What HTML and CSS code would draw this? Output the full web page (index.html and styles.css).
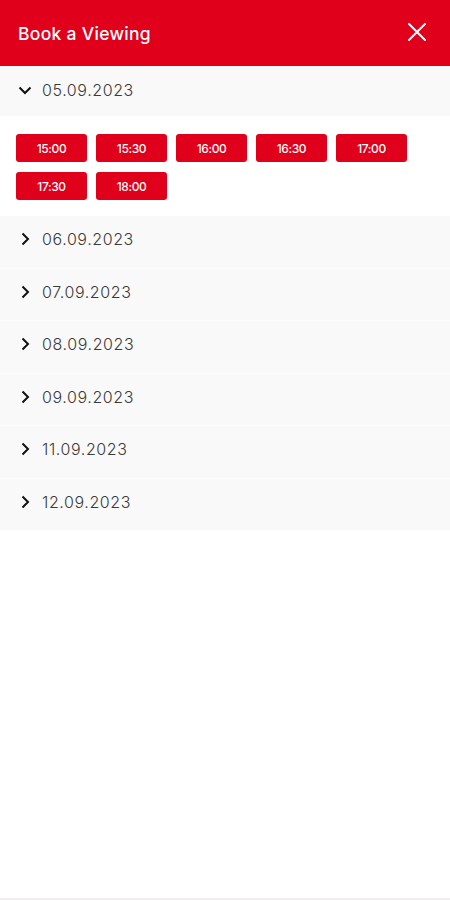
FILE: index.html
```html
<!DOCTYPE html>
<html>
<head>
<meta charset="utf-8">
<link rel="stylesheet" href="styles.css">
</head>
<body>
<div class="page">
  <header class="header">
    <h1 class="title">Book a Viewing</h1>
    <svg class="close" width="20" height="20" viewBox="0 0 20 20"><path d="M2 2 L18 18 M18 2 L2 18" stroke="#fff" stroke-width="2" fill="none" stroke-linecap="round"/></svg>
  </header>
  <div class="day open">
    <svg class="chev" width="14" height="14" viewBox="0 0 14 14"><path d="M1.5 4.5 L7 10 L12.5 4.5" stroke="#111" stroke-width="2" fill="none"/></svg>
    <span class="date">05.09.2023</span>
  </div>
  <div class="slots">
    <button class="slot">15:00</button>
    <button class="slot">15:30</button>
    <button class="slot">16:00</button>
    <button class="slot">16:30</button>
    <button class="slot">17:00</button>
    <button class="slot">17:30</button>
    <button class="slot">18:00</button>
  </div>
  <div class="day"><svg class="chev" width="14" height="14" viewBox="0 0 14 14"><path d="M4.5 1.5 L10 7 L4.5 12.5" stroke="#111" stroke-width="2" fill="none"/></svg><span class="date">06.09.2023</span></div>
  <div class="day"><svg class="chev" width="14" height="14" viewBox="0 0 14 14"><path d="M4.5 1.5 L10 7 L4.5 12.5" stroke="#111" stroke-width="2" fill="none"/></svg><span class="date">07.09.2023</span></div>
  <div class="day"><svg class="chev" width="14" height="14" viewBox="0 0 14 14"><path d="M4.5 1.5 L10 7 L4.5 12.5" stroke="#111" stroke-width="2" fill="none"/></svg><span class="date">08.09.2023</span></div>
  <div class="day"><svg class="chev" width="14" height="14" viewBox="0 0 14 14"><path d="M4.5 1.5 L10 7 L4.5 12.5" stroke="#111" stroke-width="2" fill="none"/></svg><span class="date">09.09.2023</span></div>
  <div class="day"><svg class="chev" width="14" height="14" viewBox="0 0 14 14"><path d="M4.5 1.5 L10 7 L4.5 12.5" stroke="#111" stroke-width="2" fill="none"/></svg><span class="date">11.09.2023</span></div>
  <div class="day"><svg class="chev" width="14" height="14" viewBox="0 0 14 14"><path d="M4.5 1.5 L10 7 L4.5 12.5" stroke="#111" stroke-width="2" fill="none"/></svg><span class="date">12.09.2023</span></div>
</div>
</body>
</html>
```
FILE: styles.css
```css
* { box-sizing: border-box; }
html, body { margin: 0; padding: 0; background: #fff; }
body { font-family: "Inter", "Open Sans", sans-serif; }
.page { width: 450px; height: 900px; border-bottom: 2px solid #f3eef0; }
.header {
  height: 66px;
  background: #e0001b;
  display: flex;
  align-items: center;
  justify-content: space-between;
  padding: 0 23px 0 18px;
}
.title {
  margin: 0;
  color: #fff;
  font-size: 17.5px;
  font-weight: 500;
  letter-spacing: 0.3px;
}
.close { display: block; margin-top: -2px; }
.day {
  height: 52.5px;
  background: #f9f9f9;
  border-bottom: 1px solid #fdfdfd;
  display: flex;
  align-items: center;
  padding: 0 0 5px 18px;
  gap: 10px;
}
.day.open { height: 50px; border-bottom: none; padding-bottom: 2px; }
.chev { display: block; flex: none; }
.date {
  font-size: 16px;
  font-weight: 300;
  color: #3a3a3a;
  letter-spacing: 0.6px;
}
.slots {
  height: 100px;
  padding: 18px 16px 0 16px;
  display: flex;
  flex-wrap: wrap;
  align-content: flex-start;
  column-gap: 9px;
  row-gap: 10px;
}
.slot {
  width: 71px;
  height: 28px;
  border: none;
  border-radius: 3px;
  background: #e0001b;
  color: #fff;
  font-family: "Inter", sans-serif;
  font-size: 12px;
  font-weight: 500;
  letter-spacing: -0.4px;
  padding: 0;
}
```
